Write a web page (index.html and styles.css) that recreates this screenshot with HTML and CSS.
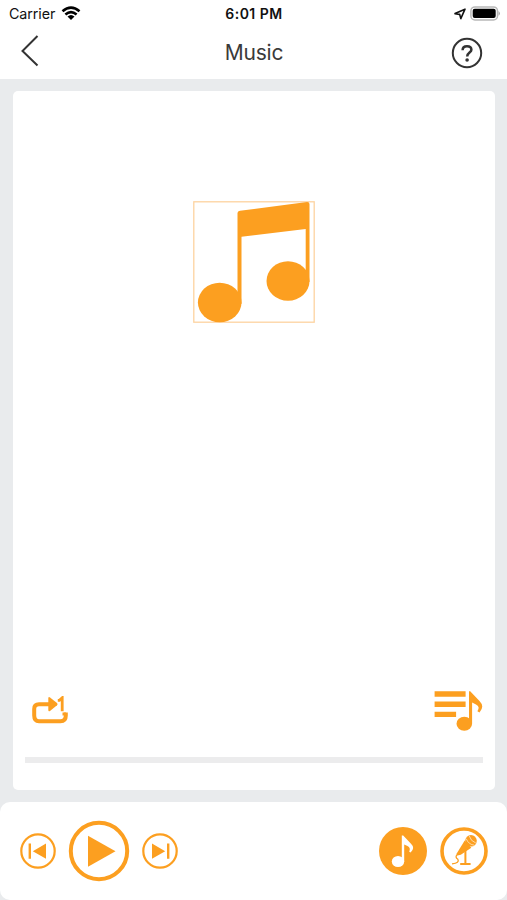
FILE: index.html
```html
<!DOCTYPE html>
<html lang="en">
<head>
<meta charset="utf-8">
<title>Music</title>
<link rel="stylesheet" href="styles.css">
</head>
<body>
<div class="screen">
  <div class="status">
    <div class="carrier"><span>Carrier</span>
      <svg width="20" height="14" viewBox="0 0 20 14" fill="none" stroke="#000" stroke-width="2.6"><path d="M1.5 5.2Q10-2 18.5 5.2M4.4 8.4Q10 3.8 15.6 8.4"/><path d="M6.5 10.6Q10 7.6 13.5 10.6L10 14Z" fill="#000" stroke="none"/></svg>
    </div>
    <div class="time">6:01 PM</div>
    <div class="power">
      <svg width="12" height="12" viewBox="0 0 12 12" fill="none" stroke="#111" stroke-width="1.6" stroke-linejoin="round"><path d="M1 5.6 11 1.2 6.8 10.6 5.700 6.400Z"/></svg>
      <svg width="31" height="15" viewBox="0 0 31 15"><rect x=".9" y=".9" width="26.6" height="13" rx="4" fill="#fff" stroke="#b8b8b8" stroke-width="1.5"/><rect x="2.7" y="2.7" width="23" height="9.4" rx="2"/><path d="M28.500 5.100Q31.400 7.400 28.500 9.700Z" fill="#aaa"/></svg>
    </div>
  </div>
  <header class="nav">
    <svg class="back" width="20" height="34" viewBox="0 0 20 34" fill="none" stroke="#333" stroke-width="2"><path d="M17.500 2 2.500 17 17.500 31.500"/></svg>
    <h1>Music</h1>
    <svg class="help" width="32" height="32" viewBox="0 0 32 32" fill="none" stroke="#333"><circle cx="16" cy="16" r="14.200" stroke-width="2"/><path d="M11.600 13.200Q11.600 9.200 16 9.200T20.400 12.800C20.400 15.700 16.200 15.600 16.200 19.500" stroke-width="2.500"/><circle cx="16.100" cy="23" r="1.800" fill="#333" stroke="none"/></svg>
  </header>
  <main class="stage">
    <section class="card">
      <div class="art">
        <svg width="122" height="122" viewBox="0 0 122 122" fill="#fc9f20"><rect x=".8" y=".8" width="120.400" height="120.400" fill="none" stroke="#fdd3a0" stroke-width="1.300"/><path d="M44.500 12Q44.500 10 47 9.700L114 1.100Q116.500 1 116.500 3V81H112.700V28L48.500 35.800V103H44.500Z"/><ellipse cx="26.700" cy="101.500" rx="21.800" ry="19.800"/><ellipse cx="95" cy="80" rx="21.500" ry="19.800"/></svg>
      </div>
      <div class="tools">
        <svg width="38" height="30" viewBox="0 0 38 30" fill="none" stroke="#fc9f20" stroke-width="4"><path d="M19 8.300H8Q3.200 8.300 3.200 13V19.500Q3.200 25.200 8 25.200H29.500Q34.800 25.200 34.800 19.500V16.500"/><path d="M17.300 2Q17.600.5 19 1.400L26 7Q27.200 8.200 26 9.300L19 15Q17.300 15.800 17.300 14Z" fill="#fc9f20" stroke="none"/><path d="M26.800 4.400H28.400L31.200 1.800V15.200" stroke-width="2.800"/><path d="M31.500 18h3.500" stroke-width="3"/></svg>
        <svg width="50" height="42" viewBox="0 0 50 42" fill="#fc9f20"><path d="M.6 1.300h31v5.400H.6zM.6 11.500h31v5.400H.6zM.6 21.700h21.500v5.400H.6z"/><ellipse cx="30.300" cy="33.800" rx="7.800" ry="7"/><path d="M35 1.300H36.200L45.500 11Q51 16.500 45.500 22.400L43.400 21.200Q46.500 16.500 42 14.500L38.100 12.500V33.500H35Z"/></svg>
      </div>
      <div class="progress"></div>
    </section>
  </main>
  <footer class="player">
    <svg class="prev" width="36" height="36" viewBox="0 0 36 36" fill="#fc9f20"><circle cx="18" cy="18" r="16.700" fill="none" stroke="#fc9f20" stroke-width="2.200"/><path d="M8.600 10.600h2.400v15.200H8.600zM12.800 18.200 26 10.600v15.200z"/></svg>
    <svg class="play" width="62" height="62" viewBox="0 0 62 62" fill="#fc9f20"><circle cx="31" cy="31" r="28.200" fill="none" stroke="#fc9f20" stroke-width="4"/><path d="M20 15.800 47.500 31.300 20 46.800z"/></svg>
    <svg class="next" width="36" height="36" viewBox="0 0 36 36" fill="#fc9f20"><circle cx="18" cy="18" r="16.700" fill="none" stroke="#fc9f20" stroke-width="2.200"/><path d="M25 10.600h2.400v15.200H25zM23.200 18.200 10 10.600v15.200z"/></svg>
    <svg class="song" width="48" height="48" viewBox="0 0 48 48"><circle cx="24" cy="24" r="24" fill="#fc9f20"/><g fill="#fff"><ellipse cx="19" cy="34.500" rx="6.200" ry="5.600"/><path d="M22.800 8.500H24.200L32 16.800Q36.500 21 31.600 25.600L30.200 24.800Q32 20.500 28.500 19L25.200 17.500V34.500H22.800Z"/></g></svg>
    <svg class="mic" width="48" height="48" viewBox="0 0 48 48"><circle cx="24" cy="24" r="22" fill="none" stroke="#fc9f20" stroke-width="3.600"/><g fill="#fc9f20"><circle cx="31" cy="13.800" r="5.800"/><path d="M24.700 13.500 31.300 20.800 20.800 27.800 17.500 28.500 16.400 27Z"/><path d="M24.400 23h2v13h-2zM20.200 36h10.400v2H20.200z"/></g><path d="M26.200 11.700Q28.500 17.500 34.300 18.200M29.300 9Q30.600 14 35.800 16" fill="none" stroke="#fff" stroke-width=".6"/><path d="M17.400 27.500Q14.500 30 17.800 32.200Q20 36 12 36.900" fill="none" stroke="#fc9f20" stroke-width="1.300"/></svg>
  </footer>
</div>
</body>
</html>
```
FILE: styles.css
```css
* { box-sizing: border-box; }
body { margin: 0; background: #e9ebed; font-family: Inter, "Liberation Sans", sans-serif; }
svg { display: block; flex: none; }
.screen { width: 507px; height: 900px; display: flex; flex-direction: column; overflow: hidden; }
.status { height: 27px; background: #fff; display: grid; grid-template-columns: 1fr auto 1fr; align-items: center; padding: 0 6px 0 9px; color: #111; }
.carrier { display: flex; align-items: center; gap: 6px; font-size: 14.3px; letter-spacing: -.1px; }
.carrier svg { margin-top: -2px; }
.time { font-size: 14px; font-weight: 600; letter-spacing: .5px; margin-left: -2px; }
.power { display: flex; align-items: center; justify-content: flex-end; gap: 4px; }
.nav { height: 52px; background: #fff; display: grid; grid-template-columns: 1fr auto 1fr; align-items: center; padding: 0 24px 0 20px; }
.back { margin-top: -5px; }
.nav h1 { margin: -2px 0 0 5px; font-size: 21px; font-weight: 400; color: #3a3a3a; letter-spacing: -.2px; }
.help { justify-self: end; margin-top: -1px; }
.stage { flex: 1; padding: 12px 12px 12px 13px; display: flex; }
.card { flex: 1; background: #fff; border-radius: 5px; padding: 110px 12px 27px; display: flex; flex-direction: column; }
.art { display: flex; justify-content: center; }
.tools { margin-top: auto; display: flex; justify-content: space-between; align-items: center; padding: 0 0 0 6px; margin-right: -1px; }
.progress { height: 6px; margin-top: 25px; background: #ececed; }
.player { height: 98px; background: #fff; border-radius: 10px; display: flex; align-items: center; padding: 0 19px; }
.prev { margin-left: 1px; }
.play { margin-left: 12px; }
.next { margin-left: 12px; }
.song { margin-left: auto; }
.mic { margin-left: 13px; }
```
